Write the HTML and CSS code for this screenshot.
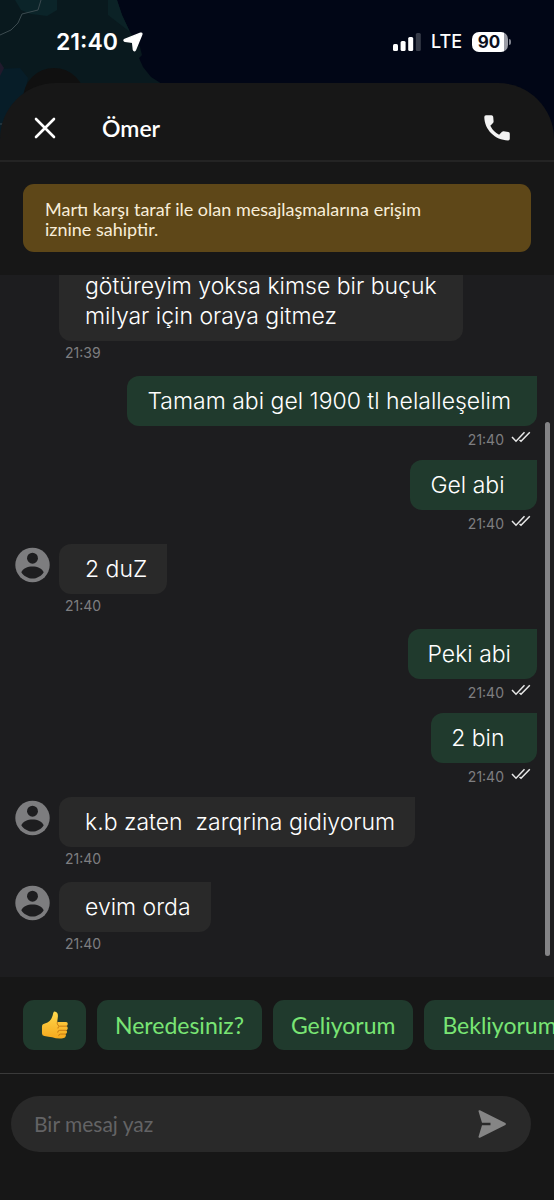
FILE: index.html
```html
<!DOCTYPE html>
<html lang="tr">
<head>
<meta charset="utf-8">
<meta name="viewport" content="width=device-width, initial-scale=1">
<title>Ömer</title>
<link rel="stylesheet" href="styles.css">
</head>
<body>
<svg width="0" height="0" class="defs" aria-hidden="true">
  <symbol id="ticks" viewBox="0 0 20 12"><path d="M1 6l4 4.200L13.500 1.200M8.500 9l1.500 1.200L18.800 1.200" fill="none" stroke="#e8e8e8" stroke-width="1.500"/></symbol>
  <symbol id="person" viewBox="0 0 36 36">
    <circle cx="18" cy="18" r="17.700" fill="#7d7d7f"/>
    <circle cx="18" cy="11" r="5.600" fill="#1d1d1f"/>
    <path d="M6.500 25.500C8 21.500 13 19.500 18 19.500s10 2 11.500 6C27 29.500 22.500 32 18 32S9 29.500 6.500 25.500z" fill="#1d1d1f"/>
  </symbol>
</svg>
<div class="app">
  <svg class="map" viewBox="0 0 554 150" preserveAspectRatio="xMinYMin slice" aria-hidden="true">
    <rect width="554" height="150" fill="#010616"/>
    <path d="M0 0h117l5 15 8 17 10 15 2 8-3 3 4 9 8 10 11 7v66H0z" fill="#09191e"/>
    <path d="M108 0h9l5 15 8 17-22-17z" fill="#0b2226"/>
    <path d="M15 0h42v10l-10 6-16-2-10-4z" fill="#0b2429"/>
    <path d="M0 69l20-1 8 10-4 16-12 16v40H0z" fill="#071d28"/>
    <path d="M0 62l4 6-4 8z" fill="#201a2c"/>
    <path d="M41 0l-3 10-16 4-4 9-7 7-11 5" fill="none" stroke="#3c4b50" stroke-width="1"/>
    <path d="M0 124h7" stroke="#3c4b50"/>
    <circle cx="54" cy="99" r="31" fill="#101010"/>
  </svg>
  <div class="status">
    <div class="clock">
      <span>21:40</span>
      <svg width="20" height="20" viewBox="0 0 20 20" aria-hidden="true"><path d="M17.500 1.200L1.800 7.400q-1.800 1.200.2 2l7.600.8.800 7.600q.9 2 2 .1L18.800 2.500q.4-1.700-1.300-1.300z" fill="#fff" stroke="#fff" stroke-width="1.400" stroke-linejoin="round"/></svg>
    </div>
    <div class="signals">
      <svg width="28" height="18" viewBox="0 0 28 18" aria-hidden="true">
        <rect x="0" y="11" width="5" height="7" rx="1.500" fill="#fff"/>
        <rect x="7.600" y="8" width="5" height="10" rx="1.500" fill="#fff"/>
        <rect x="15.200" y="4" width="5" height="14" rx="1.500" fill="#fff"/>
        <rect x="22.800" y="0" width="5" height="18" rx="1.500" fill="#363b48"/>
      </svg>
      <span class="network">LTE</span>
      <span class="battery"><span class="level">90</span></span>
    </div>
  </div>
  <main class="sheet">
    <header class="header">
      <button class="icon-button" aria-label="Kapat"><svg width="22" height="22" viewBox="0 0 22 22"><path d="M2 2l18 18M20 2L2 20" stroke="#fff" stroke-width="2.600" stroke-linecap="round"/></svg></button>
      <h1 class="name">Ömer</h1>
      <button class="icon-button" aria-label="Ara"><svg width="28" height="28" viewBox="0 0 28 28"><path d="M3 1.200h5.500q1.500 0 1.700 1.600l.4 4.400q.1 1-.6 1.700L7.300 11.800q3 6 8.800 9l2.900-3q.7-.7 1.600-.6l4.700.8q1.500.3 1.500 1.800v4.900q0 1.700-1.700 1.700C12 26.200 1.400 15.500 1.300 3q0-1.800 1.700-1.800z" fill="#f2f2f2"/></svg></button>
    </header>
    <p class="notice">Martı karşı taraf ile olan mesajlaşmalarına erişim iznine sahiptir.</p>
    <section class="chat" aria-label="Mesajlar">
      <article class="message in"><p class="bubble long">götüreyim yoksa kimse bir buçuk<br>milyar için oraya gitmez</p><div class="meta"><time>21:39</time></div></article>
      <article class="message out"><p class="bubble">Tamam abi gel 1900 tl helalleşelim</p><div class="meta"><time>21:40</time><svg class="ticks"><use href="#ticks"/></svg></div></article>
      <article class="message out"><p class="bubble">Gel abi&nbsp;</p><div class="meta"><time>21:40</time><svg class="ticks"><use href="#ticks"/></svg></div></article>
      <article class="message in"><svg class="avatar"><use href="#person"/></svg><p class="bubble">2 duZ</p><div class="meta"><time>21:40</time></div></article>
      <article class="message out"><p class="bubble">Peki abi</p><div class="meta"><time>21:40</time><svg class="ticks"><use href="#ticks"/></svg></div></article>
      <article class="message out"><p class="bubble">2 bin&nbsp;</p><div class="meta"><time>21:40</time><svg class="ticks"><use href="#ticks"/></svg></div></article>
      <article class="message in"><svg class="avatar"><use href="#person"/></svg><p class="bubble">k.b zaten&nbsp; zarqrina gidiyorum</p><div class="meta"><time>21:40</time></div></article>
      <article class="message in"><svg class="avatar"><use href="#person"/></svg><p class="bubble">evim orda</p><div class="meta"><time>21:40</time></div></article>
      <div class="scroll-thumb"></div>
    </section>
    <div class="replies">
      <button class="reply" aria-label="Beğen"><svg width="27" height="30" viewBox="1 0 28 30">
        <defs><linearGradient id="skin" x1="0" y1="0" x2="0" y2="1"><stop offset="0" stop-color="#ffd84d"/><stop offset="1" stop-color="#f5a91d"/></linearGradient></defs>
        <path d="M2 17q0-3 3-3.500 6-1.500 8-8L13.700 2.500q.6-1.700 2.200-1.300 3 .8 2.600 5.300l-.7 5.500H27q2 .4 1.700 2.300-.2 1.500-1.400 1.800 1.600.6 1.400 2.400-.2 1.600-1.700 1.900 1.200.6 1 2.200-.3 1.500-1.800 1.700.8.600.6 1.900-.3 2.200-3 2.500-6 .7-11.300-1.100Q9 27.500 4.500 26.500 2 26 2 23.500z" fill="url(#skin)"/>
        <path d="M27.500 16.200h-7q-2 .2-2 2M27 20.500h-6.500q-2.300.1-2.200 2M26.300 24.400h-5q-2 .1-2 1.500M17.800 12q-.8 1.800 1.300 3.800" fill="none" stroke="#c97a12" stroke-width="1" stroke-linecap="round"/>
      </svg></button>
      <button class="reply">Neredesiniz?</button>
      <button class="reply">Geliyorum</button>
      <button class="reply">Bekliyorum</button>
    </div>
    <form class="composer">
      <div class="field">
        <input class="input" type="text" placeholder="Bir mesaj yaz" aria-label="Bir mesaj yaz">
        <button class="icon-button" type="button" aria-label="Gönder"><svg width="30" height="30" viewBox="0 0 30 30"><path d="M1.500 2.200q0-1.500 1.400-.9L28.400 14q1.200 1 0 2L2.900 28.700q-1.400.6-1.400-.9L5 16.300h8.500v-2.600H5z" fill="#858585"/></svg></button>
      </div>
    </form>
  </main>
</div>
</body>
</html>
```

FILE: styles.css
```css
* { box-sizing: border-box; }
body { margin: 0; background: #171717; font-family: Inter, "Noto Sans", sans-serif; color: #fff; }
p, h1 { margin: 0; }
button { border: 0; padding: 0; background: none; font: inherit; color: inherit; cursor: pointer; }
button svg { display: block; }
.defs { position: absolute; }

.app { position: relative; display: flex; flex-direction: column; height: 100vh; overflow: hidden; }
.map { position: absolute; top: 0; left: 0; width: 100%; height: 150px; background: #010616; }

.status { position: relative; flex: none; display: flex; align-items: center; justify-content: space-between; height: 83px; padding: 0 46px 0 56px; }
.clock { display: flex; align-items: center; gap: 5px; font-size: 23px; font-weight: 600; line-height: 30px; }
.signals { display: flex; align-items: center; gap: 10px; }
.network { font-size: 18px; font-weight: 500; line-height: 24px; }
.battery { position: relative; display: flex; width: 36px; height: 20px; border-radius: 7px; background: linear-gradient(90deg, #fff 32px, #9a9ca6 32px); }
.battery::after { content: ""; position: absolute; left: 37px; top: 7px; width: 2px; height: 6px; border-radius: 0 3px 3px 0; background: #80838e; }
.level { width: 34px; text-align: center; font-size: 17px; line-height: 20px; font-weight: 700; color: #0b0f1c; }

.sheet { position: relative; flex: 1; min-height: 0; display: flex; flex-direction: column; border-radius: 56px 56px 0 0; background: #171717; }
.header { flex: none; display: flex; align-items: center; height: 79px; padding: 12px 43px 0 34px; border-bottom: 2px solid #242424; }
.name { flex: 1; margin-left: 46px; font-family: Lato, sans-serif; font-size: 23px; font-weight: 600; line-height: 30px; }
.notice { flex: none; margin: 22px 23px 23px; padding: 15px 90px 13px 22px; border-radius: 11px; background: #5e4718; color: #f8edd8; font-family: Lato, sans-serif; font-size: 18px; line-height: 20px; }

.chat { position: relative; flex: 1; min-height: 0; display: flex; flex-direction: column; justify-content: flex-end; padding: 0 17px 10px 15px; overflow: hidden; background: #1d1d1f; }
.message { flex: none; display: grid; }
.in { grid-template-columns: 35px 1fr; column-gap: 9px; justify-items: start; }
.out { justify-items: end; }
.in > .bubble, .in > .meta { grid-column: 2; }
.avatar { grid-column: 1; grid-row: 1; width: 35px; height: 36px; margin-top: 3px; }
.bubble { grid-row: 1; padding: 10px 20px 10px 26px; border-radius: 12px 0 12px 12px; background: #292929; font-size: 23px; font-weight: 300; line-height: 30px; }
.long { padding-right: 26px; }
.out > .bubble { padding: 10px 26px 10px 20px; background: #203a2d; }
.meta { display: flex; gap: 7px; height: 35px; padding: 3px 6px 0; font-size: 14px; line-height: 18px; color: #7e7e80; }
.out > .meta { height: 34px; padding-top: 5px; }
.ticks { width: 20px; height: 12px; }
.scroll-thumb { position: absolute; right: 4px; top: 21%; bottom: 3%; width: 5px; border-radius: 3px; background: #848486; }

.replies { flex: none; display: flex; gap: 11px; padding: 23px 0 23px 23px; overflow: hidden; border-bottom: 1px solid #3a3a3a; }
.reply { flex: none; height: 50px; padding: 0 18px; border-radius: 11px; background: #203a2d; color: #79e574; font-family: Lato, sans-serif; font-size: 23px; line-height: 30px; }
.composer { flex: none; padding: 22px 23px 48px 11px; }
.field { display: flex; align-items: center; height: 56px; padding: 0 24px 0 23px; border-radius: 28px; background: #292929; }
.input { flex: 1; min-width: 0; border: 0; outline: 0; padding: 0; background: none; color: #fff; font-family: Lato, sans-serif; font-size: 21px; line-height: 26px; }
.input::placeholder { color: #636365; opacity: 1; }
```
